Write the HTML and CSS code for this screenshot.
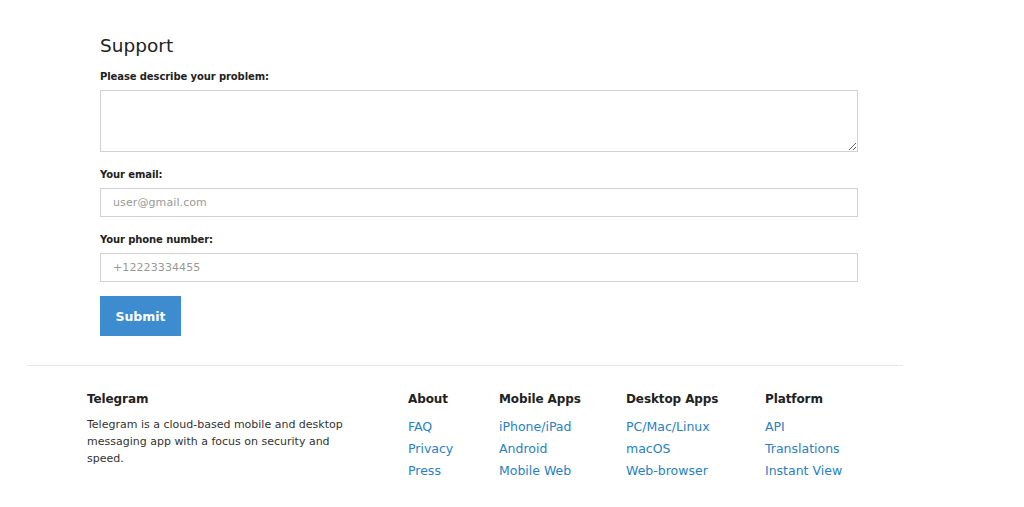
FILE: index.html
```html
<!DOCTYPE html>
<html lang="en">
<head>
    <meta charset="UTF-8">
    <meta name="viewport" content="width=device-width, initial-scale=1.0">
    <title>Support</title>
    <link rel="stylesheet" href="styles.css">
</head>
<body>
    <div class="support">
        <h2>Support</h2>
        <form id="support-form">
            <label for="problem">Please describe your problem:</label>
            <textarea id="problem"></textarea>

            <label for="email">Your email:</label>
            <input type="email" id="email" placeholder="user@gmail.com">

            <label for="phone">Your phone number:</label>
            <input type="tel" id="phone" placeholder="+12223334455">

            <button type="submit">Submit</button>
        </form>
    </div>

    <div class="footer">
        <div class="footer-cols">
            <div class="col about-text">
                <h5>Telegram</h5>
                <p>Telegram is a cloud-based mobile and desktop messaging app with a focus on security and speed.</p>
            </div>
            <div class="col">
                <h5>About</h5>
                <a href="#">FAQ</a>
                <a href="#">Privacy</a>
                <a href="#">Press</a>
            </div>
            <div class="col">
                <h5>Mobile Apps</h5>
                <a href="#">iPhone/iPad</a>
                <a href="#">Android</a>
                <a href="#">Mobile Web</a>
            </div>
            <div class="col">
                <h5>Desktop Apps</h5>
                <a href="#">PC/Mac/Linux</a>
                <a href="#">macOS</a>
                <a href="#">Web-browser</a>
            </div>
            <div class="col">
                <h5>Platform</h5>
                <a href="#">API</a>
                <a href="#">Translations</a>
                <a href="#">Instant View</a>
            </div>
        </div>
    </div>
</body>
</html>
```

FILE: styles.css
```css
body {
    margin: 0;
    font-family: "DejaVu Sans", Verdana, sans-serif;
    color: #333;
    background: #fff;
}
.support {
    width: 758px;
    margin-left: 100px;
    padding-top: 31px;
}
h2 {
    margin: 0 0 5px;
    font-size: 18.5px;
    font-weight: normal;
    line-height: 30px;
    color: #222;
}
form {
    display: flex;
    flex-direction: column;
    align-items: flex-start;
}
label {
    font-size: 10px;
    font-weight: bold;
    line-height: 20px;
    padding-top: 1px;
    margin-bottom: 3px;
    letter-spacing: -0.1px;
    color: #222;
}
textarea,
input {
    box-sizing: border-box;
    width: 100%;
    margin: 0 0 12px;
    border: 1px solid #d2d2d2;
    border-radius: 0;
    padding: 6px 12px;
    font-family: inherit;
    font-size: 11px;
    letter-spacing: 0.1px;
    color: #333;
}
textarea {
    height: 62px;
}
input {
    height: 29px;
}
input::placeholder {
    color: #999;
}
button {
    margin-top: 2px;
    width: 81px;
    height: 40px;
    border: none;
    background-color: #3d8cd0;
    color: #fff;
    font-family: inherit;
    font-size: 12.5px;
    font-weight: bold;
    cursor: pointer;
}
.footer {
    width: 876px;
    margin: 29px 0 0 27px;
    border-top: 1px solid #e8e8e8;
    padding-top: 23px;
}
.footer-cols {
    display: grid;
    grid-template-columns: 321px 91px 127px 139px auto;
    margin-left: 60px;
}
.col {
    display: flex;
    flex-direction: column;
}
h5 {
    margin: 0 0 7px;
    font-size: 12px;
    font-weight: bold;
    line-height: 20px;
    letter-spacing: -0.1px;
    color: #222;
}
.about-text p {
    margin: 0;
    width: 275px;
    font-size: 11px;
    line-height: 17px;
    color: #333;
}
.col a {
    font-size: 12.5px;
    line-height: 22px;
    color: #2481cc;
    text-decoration: none;
}
```
